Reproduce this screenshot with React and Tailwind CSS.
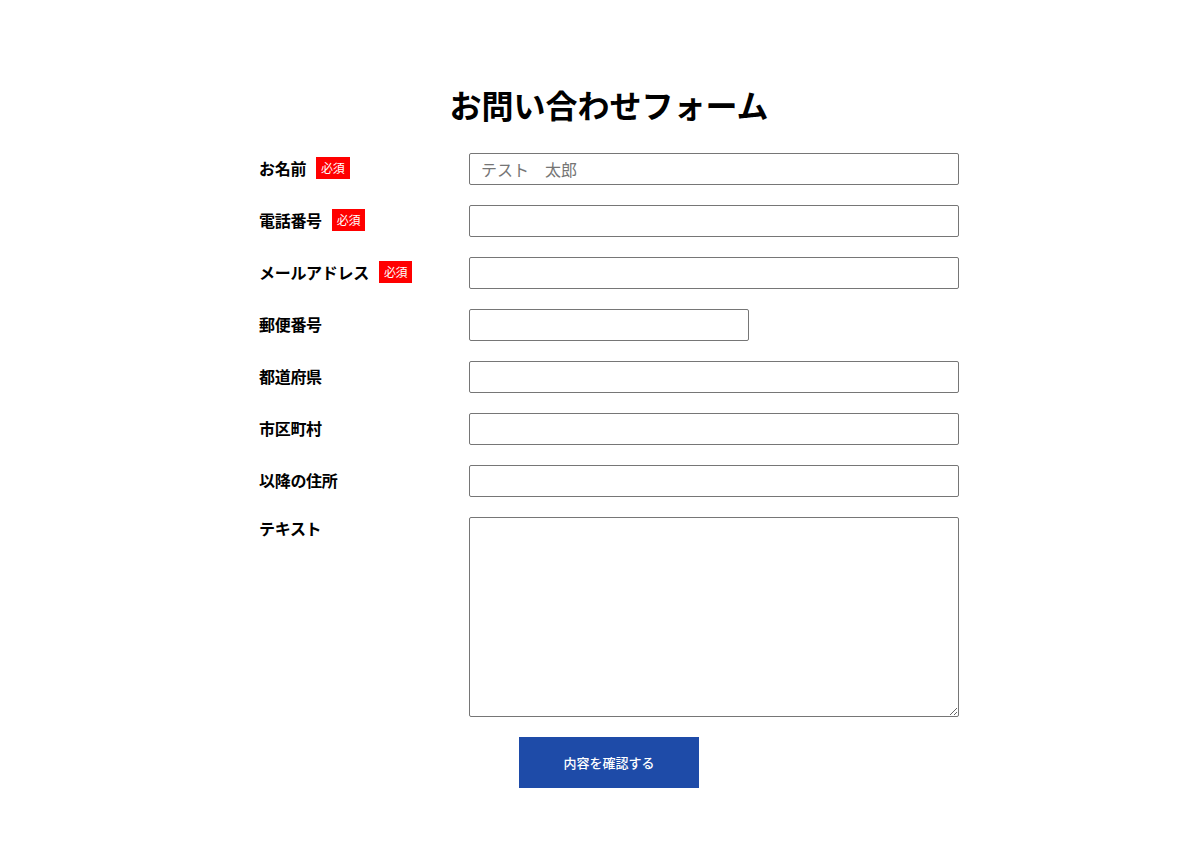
const fields = [
  { label: "お名前", required: true, placeholder: "テスト　太郎" },
  { label: "電話番号", required: true },
  { label: "メールアドレス", required: true },
  { label: "郵便番号", short: true },
  { label: "都道府県" },
  { label: "市区町村" },
  { label: "以降の住所" },
];

const Badge = () => (
  <span className="ml-[10px] inline-flex h-[22px] items-center bg-[#ff0000] px-[5px] text-[12px] font-normal leading-none text-white">
    必須
  </span>
);

const App = () => {
  return (
    <div className="min-h-screen bg-white pl-6 font-['Noto_Sans_CJK_JP','Noto_Sans',sans-serif] text-black">
      <div className="mx-auto w-[700px] pt-[80px]">
        <h1 className="mb-[25px] text-center text-[32px] font-bold leading-[48px]">お問い合わせフォーム</h1>

        <form className="flex flex-col gap-5">
          {fields.map((f) => (
            <div key={f.label} className="flex items-center">
              <label className="flex w-[210px] shrink-0 items-center pb-[2px] text-[16px] font-bold leading-[24px] tracking-[-0.3px]">
                {f.label}
                {f.required && <Badge />}
              </label>
              <input
                type="text"
                placeholder={f.placeholder}
                className={`h-8 rounded-[2px] border border-[#767676] px-[11px] text-[16px] placeholder:text-[#757575] focus:outline-none ${
                  f.short ? "w-[280px]" : "w-[490px]"
                }`}
              />
            </div>
          ))}

          <div className="flex items-start">
            <label className="w-[210px] shrink-0 text-[16px] font-bold leading-[22px] tracking-[-0.3px]">テキスト</label>
            <textarea className="h-[200px] w-[490px] rounded-[2px] border border-[#767676] px-[11px] py-1 text-[16px] focus:outline-none" />
          </div>

          <div className="flex justify-center">
            <button
              type="button"
              className="h-[51px] w-[180px] bg-[#1e4ba8] text-[13px] font-medium text-white"
            >
              内容を確認する
            </button>
          </div>
        </form>
      </div>
    </div>
  );
};

export default App;
